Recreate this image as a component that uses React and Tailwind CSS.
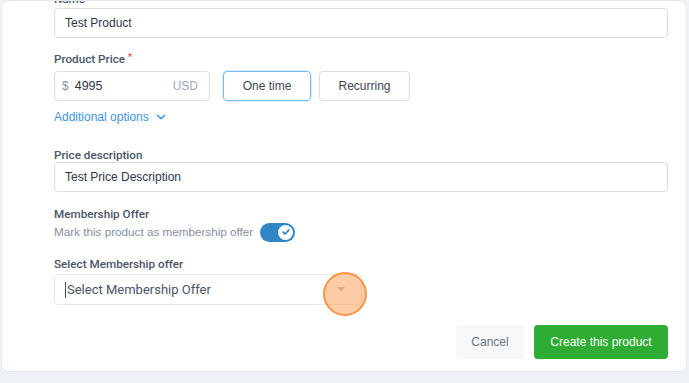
import { ChevronDown } from 'lucide-react';

function Label({ children, className = '' }) {
  return (
    <div className={`text-[11.7px] leading-[14px] font-medium text-[#4a5568] ${className}`} style={{ fontFamily: 'Roboto, sans-serif' }}>
      {children}
    </div>
  );
}

export default function App() {
  return (
    <div className="w-[689px] h-[383px] bg-[#eef2f6] overflow-hidden" style={{ fontFamily: '"Liberation Sans", Arial, sans-serif' }}>
      <div className="ml-px w-[686px] h-[372px] bg-white rounded-lg border border-[#e3e8ee] overflow-hidden">
        <div className="-mt-[9px] pl-[52px] pr-[18px]">
          <Label>Name</Label>
          <div className="mt-[2px] h-[30px] border border-[#d8dde3] rounded-[4px] flex items-center px-[10px] text-[12px] text-[#2d3748]">
            Test Product
          </div>

          <Label className="mt-[14px]">
            Product Price <span className="text-[#e53e3e] text-[9px] align-top relative -top-[2px]">*</span>
          </Label>
          <div className="mt-[5px] flex items-center">
            <div className="w-[156px] h-[30px] border border-[#d8dde3] rounded-[4px] flex items-center px-[7px] text-[12px]">
              <span className="text-[#8a94a3]">$</span>
              <span className="ml-[6px] text-[12.5px] text-[#2d3748] flex-1">4995</span>
              <span className="text-[#a0aab8] mr-[4px]">USD</span>
            </div>
            <button className="ml-[13px] w-[88px] h-[30px] border border-[#7cbbeb] rounded-[4px] text-[12px] text-[#3c4658] shadow-[0_0_0_1px_rgba(124,187,235,0.25)]">
              One time
            </button>
            <button className="ml-[8px] w-[91px] h-[30px] border border-[#d8dde3] rounded-[4px] text-[12px] text-[#3c4658]">
              Recurring
            </button>
          </div>

          <div className="mt-[9px] h-[14px] flex items-center text-[12px] text-[#3d95e4]">
            Additional options
            <ChevronDown size={14} strokeWidth={2.6} className="ml-[5px]" />
          </div>

          <Label className="mt-[24px]">Price description</Label>
          <div className="h-[30px] border border-[#d8dde3] rounded-[4px] flex items-center px-[10px] text-[12px] text-[#2d3748]">
            Test Price Description
          </div>

          <Label className="mt-[15px]">Membership Offer</Label>
          <div className="mt-px h-[20px] flex items-center text-[11.7px] text-[#8590a0]">
            Mark this product as membership offer
            <div className="ml-[7px] w-[35px] h-[19px] rounded-full bg-[#3186c6] flex items-center justify-end pr-[2px]">
              <div className="w-[15px] h-[15px] rounded-full bg-white flex items-center justify-center">
                <svg width="8" height="8" viewBox="0 0 8 8" fill="none">
                  <path d="M1.2 4.2 L3.2 6 L6.8 2" stroke="#3186c6" strokeWidth="1.8" strokeLinecap="round" strokeLinejoin="round" />
                </svg>
              </div>
            </div>
          </div>

          <Label className="mt-[15px]">Select Membership offer</Label>
          <div className="relative mt-[3px] w-[308px] h-[31px] border border-[#e3e7ec] rounded-[4px] flex items-center pl-[10px] pr-[12px]">
            <span className="w-px h-[16px] bg-[#4a5568]" />
            <span className="ml-px flex-1 text-[13px] text-[#4a5568]" style={{ fontFamily: 'Roboto, sans-serif' }}>Select Membership Offer</span>
            <svg width="8" height="5" viewBox="0 0 8 5" className="mr-[4px]">
              <path d="M0 0 L8 0 L4 4.5 Z" fill="#b8bec8" />
            </svg>
            <div className="absolute left-[268px] top-[-3px] w-[44px] h-[44px] rounded-full bg-[#fb9a4b]/50 border-2 border-[#f6944a]" />
          </div>

          <div className="mt-[20px] flex justify-end gap-[10px]">
            <button className="w-[68px] h-[34px] rounded-[4px] bg-[#f6f8fa] text-[12px] text-[#6b7585] font-medium">
              Cancel
            </button>
            <button className="w-[134px] h-[34px] rounded-[4px] bg-[#2fac33] text-[12px] text-white font-medium">
              Create this product
            </button>
          </div>
        </div>
      </div>
    </div>
  );
}
